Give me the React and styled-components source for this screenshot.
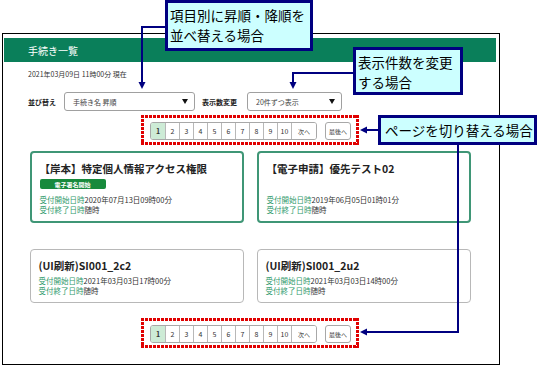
import React from "react";
import styled, { createGlobalStyle } from "styled-components";

const GlobalStyle = createGlobalStyle`
  html, body {
    margin: 0;
    padding: 0;
    background: #ffffff;
  }
  body {
    font-family: "Noto Sans CJK JP", "Noto Sans", sans-serif;
    color: #333333;
  }
`;

const Page = styled.div`
  position: relative;
  box-sizing: border-box;
  width: 540px;
  height: 366px;
  padding: 33px 0 0 2px;
  overflow: hidden;
`;

const Frame = styled.div`
  box-sizing: border-box;
  width: 498px;
  height: 332px;
  border: 1px solid #000000;
  padding: 4px 3px 0 1px;
`;

const Header = styled.div`
  height: 24px;
  background: #0a7f5a;
  color: #ffffff;
  font-size: 10px;
  display: flex;
  align-items: center;
  padding-left: 24px;
`;

const Toolbar = styled.div`
  padding-left: 24px;
`;

const Stamp = styled.div`
  margin-top: 7px;
  font-size: 7px;
  line-height: 10px;
  color: #333333;
`;

const SortRow = styled.div`
  display: flex;
  align-items: center;
  margin-top: 13px;
  height: 19px;
`;

const FieldLabel = styled.span`
  width: ${(p) => p.$w}px;
  font-size: 7px;
  font-weight: 700;
  color: #222222;
  margin-left: ${(p) => p.$ml || 0}px;
`;

const Select = styled.div`
  box-sizing: border-box;
  width: ${(p) => p.$w}px;
  height: 19px;
  border: 1px solid #a0a0a0;
  border-radius: 3px;
  display: flex;
  align-items: center;
  justify-content: space-between;
  padding: 0 6px 0 8px;
  font-size: 7px;
  color: #444444;
`;

const Caret = styled.span`
  width: 0;
  height: 0;
  border-left: 3.5px solid transparent;
  border-right: 3.5px solid transparent;
  border-top: 5px solid #111111;
`;

const PagerRow = styled.div`
  display: flex;
  justify-content: center;
  margin-top: ${(p) => p.$mt}px;
`;

const dots = (dir) =>
  `repeating-linear-gradient(${dir}, #e00000 0 3px, transparent 3px 4px)`;

const Highlight = styled.div`
  display: inline-flex;
  align-items: center;
  gap: 8px;
  padding: 7px 8px 5px 9px;
  background:
    ${dots("90deg")} top left / 100% 3px no-repeat,
    ${dots("90deg")} bottom left / 100% 3px no-repeat,
    ${dots("180deg")} top left / 3px 100% no-repeat,
    ${dots("180deg")} top right / 3px 100% no-repeat;
`;

const PageGroup = styled.div`
  display: flex;
  height: 18px;
  border: 1px solid #a8a8a8;
  border-radius: 3px;
  overflow: hidden;
  box-sizing: border-box;
`;

const PageButton = styled.div`
  box-sizing: border-box;
  width: ${(p) => p.$w || 14}px;
  height: 100%;
  display: flex;
  align-items: center;
  justify-content: center;
  font-size: ${(p) => (p.$small ? 6 : 7)}px;
  font-weight: ${(p) => (p.$active ? 700 : 400)};
  color: #333333;
  background: ${(p) => (p.$active ? "#cdebd6" : "#ffffff")};
  & + & {
    border-left: 1px solid #b8b8b8;
  }
`;

const LastButton = styled.div`
  box-sizing: border-box;
  width: 26px;
  height: 18px;
  border: 1px solid #a8a8a8;
  border-radius: 3px;
  display: flex;
  align-items: center;
  justify-content: center;
  font-size: 6px;
  color: #333333;
`;

const CardGrid = styled.div`
  display: grid;
  grid-template-columns: 214px 214px;
  grid-template-rows: 72px 54px;
  column-gap: 13px;
  row-gap: 26px;
  justify-content: center;
  margin-top: 6px;
`;

const Card = styled.div`
  box-sizing: border-box;
  border: ${(p) => (p.$active ? "2px solid #3f9676" : "1px solid #b8b8b8")};
  border-radius: 4px;
  padding: 8px 8px 6px;
  display: flex;
  flex-direction: column;
`;

const CardTitle = styled.div`
  font-size: 10.5px;
  font-weight: 700;
  line-height: 16px;
  color: #222222;
  white-space: nowrap;
`;

const Badge = styled.div`
  margin-top: 2px;
  width: 66px;
  height: 10px;
  border-radius: 2px;
  background: #178a3c;
  color: #ffffff;
  font-size: 6px;
  font-weight: 700;
  display: flex;
  align-items: center;
  justify-content: center;
`;

const Dates = styled.div`
  margin-top: auto;
`;

const DateLine = styled.div`
  font-size: 7.5px;
  line-height: 10px;
  color: #333333;
  white-space: nowrap;
`;

const DateKey = styled.span`
  color: #2f9a6c;
`;

const Overlay = styled.svg`
  position: absolute;
  left: 0;
  top: 0;
  z-index: 2;
  pointer-events: none;
`;

const Callout = styled.div`
  position: absolute;
  z-index: 3;
  box-sizing: border-box;
  left: ${(p) => p.$x}px;
  top: ${(p) => p.$y}px;
  width: ${(p) => p.$w}px;
  height: ${(p) => p.$h}px;
  padding: ${(p) => p.$pad};
  background: #ccffff;
  border: 3px solid #000080;
  color: #000000;
  font-size: 13.5px;
  line-height: ${(p) => p.$lh}px;
  white-space: nowrap;
`;

const cards = [
  {
    title: "【岸本】特定個人情報アクセス権限",
    badge: "電子署名開始",
    start: "2020年07月13日09時00分",
    active: true,
  },
  {
    title: "【電子申請】優先テスト02",
    start: "2019年06月05日01時01分",
    active: true,
  },
  { title: "(UI刷新)SI001_2c2", start: "2021年03月03日17時00分" },
  { title: "(UI刷新)SI001_2u2", start: "2021年03月03日14時00分" },
];

function Pager({ mt }) {
  const pages = [1, 2, 3, 4, 5, 6, 7, 8, 9, 10];
  return (
    <PagerRow $mt={mt}>
      <Highlight>
        <PageGroup>
          {pages.map((n) => (
            <PageButton key={n} $active={n === 1}>
              {n}
            </PageButton>
          ))}
          <PageButton $w={25} $small>
            次へ
          </PageButton>
        </PageGroup>
        <LastButton>最後へ</LastButton>
      </Highlight>
    </PagerRow>
  );
}

export default function App() {
  const navy = "#000080";
  return (
    <Page>
      <GlobalStyle />
      <Frame>
        <Header>手続き一覧</Header>
        <Toolbar>
          <Stamp>2021年03月09日 11時00分 現在</Stamp>
          <SortRow>
            <FieldLabel $w={36}>並び替え</FieldLabel>
            <Select $w={131}>
              <span>手続き名 昇順</span>
              <Caret />
            </Select>
            <FieldLabel $w={45} $ml={7}>
              表示数変更
            </FieldLabel>
            <Select $w={95}>
              <span>20件ずつ表示</span>
              <Caret />
            </Select>
          </SortRow>
        </Toolbar>
        <Pager mt={4} />
        <CardGrid>
          {cards.map((c, i) => (
            <Card key={i} $active={c.active}>
              <CardTitle>{c.title}</CardTitle>
              {c.badge && <Badge>{c.badge}</Badge>}
              <Dates>
                <DateLine>
                  <DateKey>受付開始日時</DateKey>
                  {c.start}
                </DateLine>
                <DateLine>
                  <DateKey>受付終了日時</DateKey>随時
                </DateLine>
              </Dates>
            </Card>
          ))}
        </CardGrid>
        <Pager mt={15} />
      </Frame>

      <Overlay width="540" height="366" viewBox="0 0 540 366">
        <g stroke={navy} strokeWidth="2" fill="none">
          <polyline points="165,27 142,27 142,83" />
          <polyline points="353,73 293,73 293,83" />
          <polyline points="378,130 366,130" />
          <polyline points="458,145 458,332 366,332" />
        </g>
        <g fill={navy}>
          <polygon points="138.5,82 145.5,82 142,89" />
          <polygon points="289.5,82 296.5,82 293,89" />
          <polygon points="360,130 367,126.5 367,133.5" />
          <polygon points="360,332 367,328.5 367,335.5" />
        </g>
      </Overlay>

      <Callout $x={165} $y={0} $w={148} $h={51} $pad="2px 2px" $lh={20}>
        項目別に昇順・降順を
        <br />
        並べ替える場合
      </Callout>
      <Callout $x={353} $y={47} $w={110} $h={48} $pad="2px 2px" $lh={20}>
        表示件数を変更
        <br />
        する場合
      </Callout>
      <Callout $x={378} $y={115} $w={159} $h={30} $pad="0 4px" $lh={24}>
        ページを切り替える場合
      </Callout>
    </Page>
  );
}
